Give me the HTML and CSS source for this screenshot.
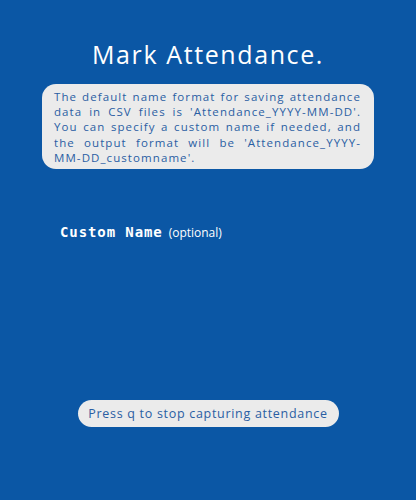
FILE: index.html
```html
<!DOCTYPE html>
<html>
<head>
<meta charset="utf-8">
<link rel="stylesheet" href="styles.css">
</head>
<body>
<div class="screen">
  <h1 class="title">Mark Attendance.</h1>
  <div class="info">
    <p>The default name format for saving attendance data in CSV files is 'Attendance_YYYY-MM-DD'. You can specify a custom name if needed, and the output format will be 'Attendance_YYYY-MM-DD_customname'.</p>
  </div>
  <div class="field">
    <span class="label">Custom Name</span>
    <span class="opt">(optional)</span>
  </div>
  <div class="spacer"></div>
  <div class="btn-row">
    <div class="btn">Press q to stop capturing attendance</div>
  </div>
</div>
</body>
</html>
```
FILE: styles.css
```css
html, body {
  margin: 0;
  padding: 0;
  background: #0b57a5;
}
.screen {
  width: 416px;
  height: 500px;
  display: flex;
  flex-direction: column;
  box-sizing: border-box;
  padding-top: 37px;
}
.title {
  margin: 0;
  text-align: center;
  color: #ffffff;
  font-family: "Open Sans", sans-serif;
  font-weight: 400;
  font-size: 25px;
  letter-spacing: 1.6px;
  line-height: 34px;
}
.info {
  margin: 13px 42px 0 42px;
  background: #ebebeb;
  border-radius: 14px;
  padding: 5px 13px 4px 12px;
}
.info p {
  margin: 0;
  color: #2a5ea3;
  font-family: "Open Sans", sans-serif;
  font-size: 11.5px;
  line-height: 15.2px;
  letter-spacing: 1.08px;
  text-align: justify;
}
.field {
  margin: 55px 0 0 60px;
  display: flex;
  align-items: baseline;
  gap: 6px;
  color: #ffffff;
}
.label {
  font-family: "DejaVu Sans Mono", monospace;
  font-weight: bold;
  font-size: 14px;
  letter-spacing: 0.9px;
}
.opt {
  font-family: "Open Sans", sans-serif;
  font-size: 12px;
}
.spacer {
  height: 159px;
}
.btn-row {
  display: flex;
  justify-content: center;
}
.btn {
  width: 261px;
  height: 27px;
  border-radius: 14px;
  background: #ebebeb;
  color: #2a5ea3;
  font-family: "Open Sans", sans-serif;
  font-size: 12.5px;
  letter-spacing: 0.7px;
  display: flex;
  align-items: center;
  justify-content: center;
}
```
